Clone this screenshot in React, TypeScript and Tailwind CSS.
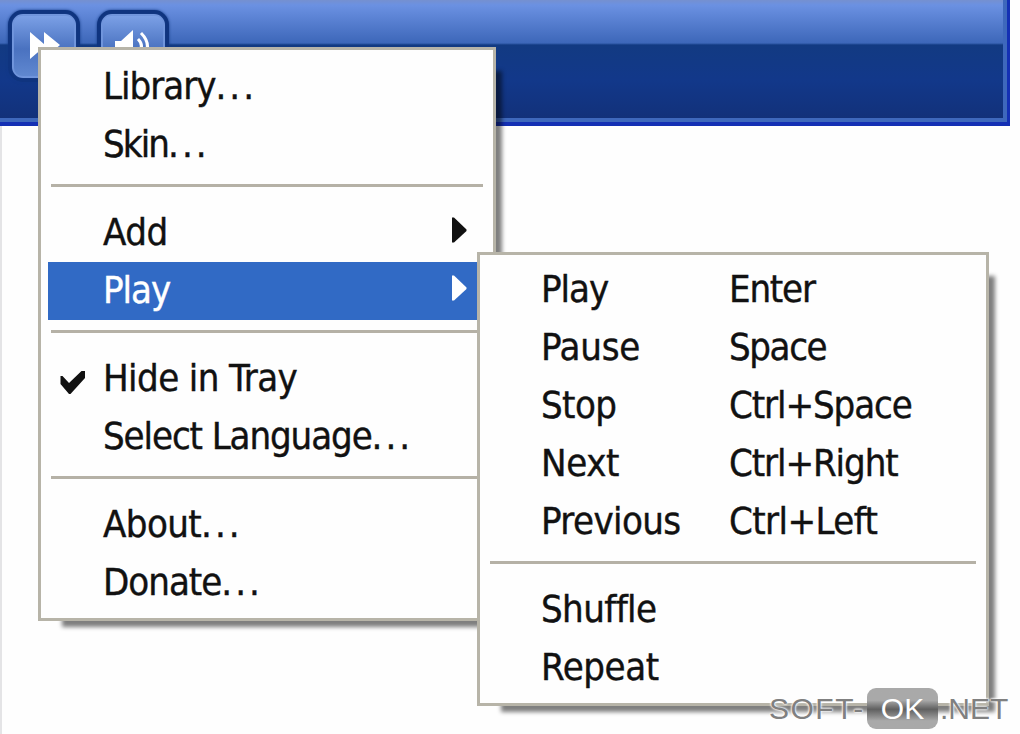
import React from 'react';
import clsx from 'clsx';

interface MenuEntry {
  label: string;
  tracking: string;
  dots?: boolean;
  shortcut?: string;
  shortcutTracking?: string;
  checked?: boolean;
  submenu?: boolean;
  active?: boolean;
}

// Each inner array is a group, groups are divided by a separator
const mainGroups: MenuEntry[][] = [
  [
    { label: 'Library', tracking: 'tracking-[-1px]', dots: true },
    { label: 'Skin', tracking: 'tracking-[-1.9px]', dots: true },
  ],
  [
    { label: 'Add', tracking: 'tracking-[-0.5px]', submenu: true },
    { label: 'Play', tracking: 'tracking-[-1px]', submenu: true, active: true },
  ],
  [
    { label: 'Hide in Tray', tracking: 'tracking-[-0.6px]', checked: true },
    { label: 'Select Language', tracking: 'tracking-[-1.1px]', dots: true },
  ],
  [
    { label: 'About', tracking: 'tracking-[-0.6px]', dots: true },
    { label: 'Donate', tracking: 'tracking-[-1px]', dots: true },
  ],
];

const playGroups: MenuEntry[][] = [
  [
    { label: 'Play', tracking: 'tracking-[-1px]', shortcut: 'Enter', shortcutTracking: 'tracking-[-1.2px]' },
    { label: 'Pause', tracking: 'tracking-[-0.3px]', shortcut: 'Space', shortcutTracking: 'tracking-[-1.4px]' },
    { label: 'Stop', tracking: 'tracking-[-0.6px]', shortcut: 'Ctrl+Space', shortcutTracking: 'tracking-[-1.1px]' },
    { label: 'Next', tracking: 'tracking-[-0.4px]', shortcut: 'Ctrl+Right', shortcutTracking: 'tracking-[-1.1px]' },
    { label: 'Previous', tracking: 'tracking-[-0.6px]', shortcut: 'Ctrl+Left', shortcutTracking: 'tracking-[-0.6px]' },
  ],
  [
    { label: 'Shuffle', tracking: 'tracking-[-0.6px]' },
    { label: 'Repeat', tracking: 'tracking-[-0.4px]' },
  ],
];

const CheckIcon: React.FC = () => (
  <svg className="w-[26px] h-[26px]" viewBox="0 0 26 26" fill="currentColor">
    <path d="M1.500 7h2l6.500 7L22.500 2H26v7L11.500 25H10L1.500 15z" />
  </svg>
);

const ArrowIcon: React.FC = () => (
  <svg className="w-[15px] h-[26px]" viewBox="0 0 15 26" fill="currentColor">
    <path d="M0 0.500h2l12.500 12v1.500L2 25.500H0z" />
  </svg>
);

const MenuRow: React.FC<{ entry: MenuEntry; sub?: boolean }> = ({ entry, sub }) => (
  <li
    className={clsx(
      'flex items-center h-[58px] text-[38px] leading-[54px] whitespace-pre [-webkit-text-stroke:0.4px_currentColor]',
      entry.active ? 'bg-[#316ac5] text-white' : 'text-[#111]',
    )}
  >
    <span className={clsx('flex items-center shrink-0', sub ? 'w-[54px]' : 'w-[55px] pl-[11px] pt-[6px]')}>
      {entry.checked && <CheckIcon />}
    </span>
    <span className={clsx('shrink-0 pb-[3px]', sub && 'w-[188px]', entry.tracking)}>
      {entry.label}
      {entry.dots && <span className="tracking-[3px]">...</span>}
    </span>
    {entry.shortcut && <span className={clsx('pb-[3px]', entry.shortcutTracking)}>{entry.shortcut}</span>}
    {entry.submenu && (
      <span className="flex ml-auto mr-[19px] mb-[6px]">
        <ArrowIcon />
      </span>
    )}
  </li>
);

const Menu: React.FC<{ groups: MenuEntry[][]; sub?: boolean }> = ({ groups, sub }) => (
  <ul className={clsx('relative h-full border-[3px] border-[#b7b4a8] bg-[#fefefe] px-[7px]', sub ? 'pt-[6px]' : 'pt-[8px]')}>
    {groups.map((group, i) => (
      <React.Fragment key={i}>
        {i > 0 && (
          <li className="h-[30px] pt-[10px] px-[3px]">
            <div className="h-[3px] bg-[#b5b1a6]" />
          </li>
        )}
        {group.map(entry => (
          <MenuRow key={entry.label} entry={entry} sub={sub} />
        ))}
      </React.Fragment>
    ))}
  </ul>
);

const PlayerButton: React.FC<{ children: React.ReactNode }> = ({ children }) => (
  <div className="w-[72px] h-[72px] rounded-[15px] border-[4px] border-[#0f347f] bg-[#7397dd] shadow-[0_0_3px_#123a86] p-[2px]">
    <div className="w-full h-full rounded-[8px] bg-linear-to-b from-[#7ba0e6] from-0% via-[#4a72c0] via-55% to-[#6088d0] shadow-[0_0_3px_#6a90da] text-white">
      {children}
    </div>
  </div>
);

const App: React.FC = () => {
  return (
    <div className="relative flex flex-col w-[1020px] h-[734px] overflow-hidden bg-[#fefefe] font-['DejaVu_Sans_Condensed','DejaVu_Sans',sans-serif]">
      {/* Player bar */}
      <header className="w-[1010px] h-[126px] shrink-0 border-r-[3px] border-b-[4px] border-[#1430b4] bg-[#3e68bc]">
        <div className="w-[1003px] h-[118px] bg-[linear-gradient(to_bottom,#7590d0_0,#6b91e2_5px,#3d67b9_43px,#123a82_45px,#12388a_80px,#12317a_118px)]">
          <div className="flex gap-[17px] pl-[8px] pt-[10px]">
            <PlayerButton>
              <svg className="w-[60px] h-[60px]" viewBox="0 0 60 60" fill="currentColor">
                <path d="M16 16l14 12V16L46 29 30 43V31L16 43z" />
              </svg>
            </PlayerButton>
            <PlayerButton>
              <svg className="w-[60px] h-[60px]" viewBox="0 0 60 60" fill="none" stroke="currentColor" strokeWidth="3">
                <path d="M12 25h6l12-11v34L18 36h-6z" fill="currentColor" stroke="none" />
                <path d="M35 23q7 7 0 15M38 17q13 13 0 28" />
              </svg>
            </PlayerButton>
          </div>
        </div>
      </header>
      <div className="flex-1 border-l-2 border-[#e4e4e6]" />

      {/* Main menu */}
      <nav className="absolute left-[38px] top-[47px] w-[458px] h-[574px]">
        <div className="absolute left-[24px] top-[24px] w-[440px] h-[556px] bg-black/50 blur-[2px]" />
        <Menu groups={mainGroups} />
      </nav>

      {/* Play submenu */}
      <nav className="absolute left-[477px] top-[252px] w-[512px] h-[454px]">
        <div className="absolute left-[24px] top-[24px] w-[494px] h-[436px] bg-black/50 blur-[2px]" />
        <Menu groups={playGroups} sub />
      </nav>

      {/* Watermark */}
      <div className="absolute left-[769px] top-[688px] flex items-center h-[41px] text-[30px] text-[#808080] font-['Liberation_Sans',sans-serif] [text-shadow:0_0_2px_#fff,0_0_2px_#fff,0_0_3px_#fff]">
        <span className="w-[98px] tracking-[1.5px]">SOFT-</span>
        <span className="w-[71px] h-[41px] rounded-[9px] bg-linear-to-b from-[#a9a9a9] from-30% via-[#606060] via-52% to-[#a9a9a9] to-80% text-center leading-[41px] text-white [text-shadow:none]">OK</span>
        <span className="ml-[2px]">.NET</span>
      </div>
    </div>
  );
};

export default App;
